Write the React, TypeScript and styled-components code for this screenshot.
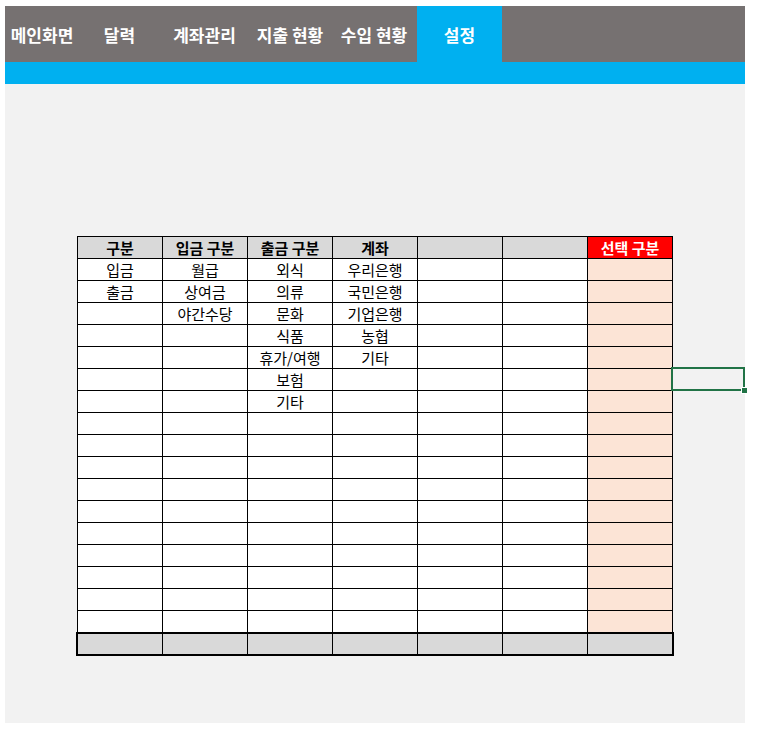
import React from 'react';
import styled, { createGlobalStyle } from 'styled-components';

const GlobalStyle = createGlobalStyle`
  html, body {
    margin: 0;
    padding: 0;
    background: #ffffff;
  }
  body {
    font-family: "Noto Sans CJK KR", "Noto Sans", sans-serif;
  }
`;

const Frame = styled.div`
  width: 740px;
  margin: 6px 0 0 5px;
`;

const NavBar = styled.div`
  display: flex;
  height: 56px;
  background: #767171;
`;

const Tab = styled.div<{ $width: number; $active?: boolean }>`
  width: ${p => p.$width}px;
  display: flex;
  align-items: center;
  justify-content: center;
  color: #ffffff;
  font-size: 17px;
  font-weight: 700;
  white-space: nowrap;
  background: ${p => (p.$active ? '#00b0f0' : 'transparent')};
`;

const BlueStrip = styled.div`
  height: 22px;
  background: #00b0f0;
`;

const Sheet = styled.div`
  position: relative;
  height: 639px;
  background: #f2f2f2;
  padding: 152px 0 0 72px;
  box-sizing: border-box;
`;

const Grid = styled.div`
  display: grid;
  grid-template-columns: repeat(7, 85px);
  width: 596px;
  border-left: 1px solid #000;
  border-top: 1px solid #000;
  box-sizing: border-box;
`;

const Cell = styled.div<{ $kind?: 'head' | 'alert' | 'pick' }>`
  height: 22px;
  box-sizing: border-box;
  border-right: 1px solid #000;
  border-bottom: 1px solid #000;
  display: flex;
  align-items: center;
  justify-content: center;
  padding-bottom: 1px;
  font-size: 15px;
  line-height: 1;
  white-space: nowrap;
  color: ${p => (p.$kind === 'alert' ? '#ffffff' : '#000000')};
  font-weight: ${p => (p.$kind === 'head' || p.$kind === 'alert' ? 700 : 400)};
  background: ${p =>
    p.$kind === 'head'
      ? '#d9d9d9'
      : p.$kind === 'alert'
      ? '#ff0000'
      : p.$kind === 'pick'
      ? '#fce4d6'
      : '#ffffff'};
`;

const Footer = styled.div`
  display: grid;
  grid-template-columns: repeat(6, 85px) 84px;
  width: 598px;
  margin: -1px 0 0 -1px;
  border: 2px solid #000;
  box-sizing: border-box;
  background: #d9d9d9;
`;

const FooterCell = styled.div`
  height: 20px;
  border-right: 1px solid #000;
  &:last-child {
    border-right: none;
  }
`;

const Selection = styled.div`
  position: absolute;
  left: 666px;
  top: 283px;
  width: 74px;
  height: 24px;
  border: 2px solid #217346;
  box-sizing: border-box;
`;

const Handle = styled.div`
  position: absolute;
  right: -5px;
  bottom: -5px;
  width: 5px;
  height: 5px;
  background: #217346;
  border: 1px solid #ffffff;
`;

const tabs = [
  { label: '메인화면', width: 74 },
  { label: '달력', width: 81 },
  { label: '계좌관리', width: 89 },
  { label: '지출 현황', width: 82 },
  { label: '수입 현황', width: 86 },
  { label: '설정', width: 85, active: true },
];

const headers = ['구분', '입금 구분', '출금 구분', '계좌', '', ''];

const columns: string[][] = [
  ['입금', '출금'],
  ['월급', '상여금', '야간수당'],
  ['외식', '의류', '문화', '식품', '휴가/여행', '보험', '기타'],
  ['우리은행', '국민은행', '기업은행', '농협', '기타'],
  [],
  [],
];

const ROWS = 17;

export default function App() {
  return (
    <>
      <GlobalStyle />
      <Frame>
        <NavBar>
          {tabs.map(t => (
            <Tab key={t.label} $width={t.width} $active={t.active}>
              {t.label}
            </Tab>
          ))}
        </NavBar>
        <BlueStrip />
        <Sheet>
          <Grid>
            {headers.map((h, i) => (
              <Cell key={'h' + i} $kind="head">
                {h}
              </Cell>
            ))}
            <Cell $kind="alert">선택 구분</Cell>
            {Array.from({ length: ROWS }).map((_, r) => (
              <React.Fragment key={r}>
                {columns.map((col, c) => (
                  <Cell key={c}>{col[r] ?? ''}</Cell>
                ))}
                <Cell $kind="pick" />
              </React.Fragment>
            ))}
          </Grid>
          <Footer>
            {Array.from({ length: 7 }).map((_, i) => (
              <FooterCell key={i} />
            ))}
          </Footer>
          <Selection>
            <Handle />
          </Selection>
        </Sheet>
      </Frame>
    </>
  );
}
